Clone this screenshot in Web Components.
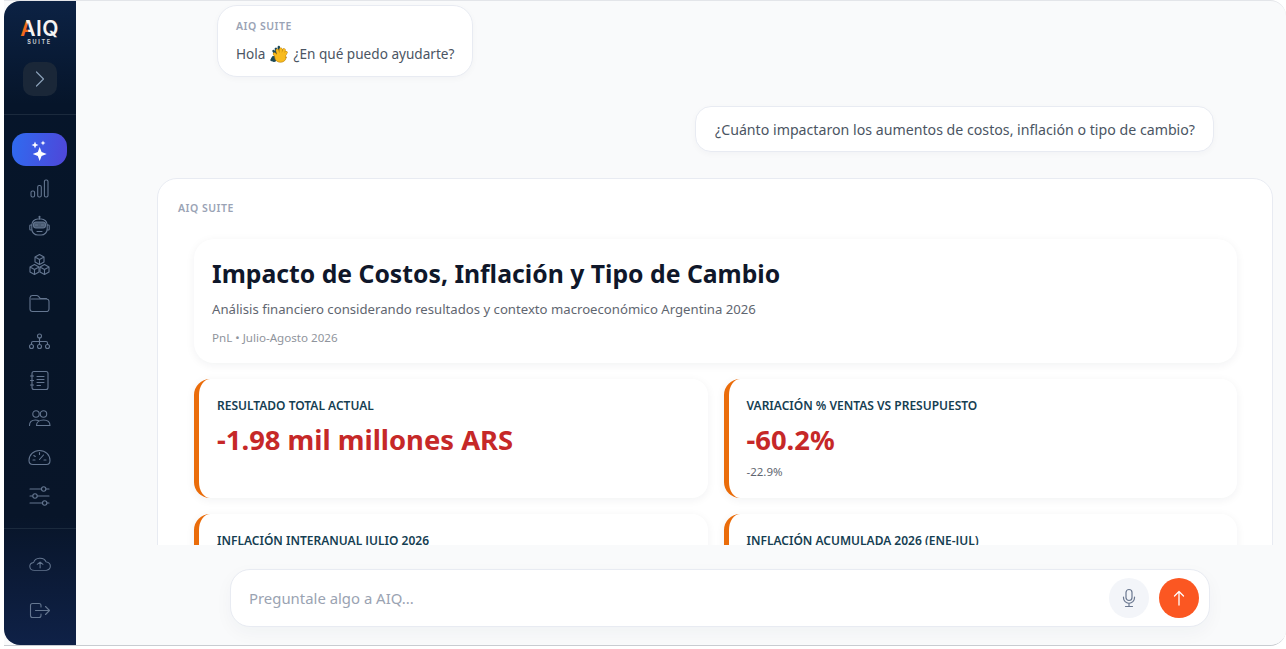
<!DOCTYPE html>
<html lang="es">
<head>
<meta charset="utf-8">
<title>AIQ Suite</title>
<style>
  html, body { margin: 0; height: 100%; background: #fff; overflow: hidden; }
  body { font-family: "Noto Sans", "Liberation Sans", sans-serif; }
</style>
</head>
<body>
<app-shell>
  <side-bar slot="side"></side-bar>
  <chat-view slot="main">
    <chat-bubble kind="hello" label="AIQ SUITE">Hola <clap-emoji></clap-emoji> ¿En qué puedo ayudarte?</chat-bubble>
    <chat-bubble kind="user">¿Cuánto impactaron los aumentos de costos, inflación o tipo de cambio?</chat-bubble>
    <report-card label="AIQ SUITE">
      <report-header
        heading="Impacto de Costos, Inflación y Tipo de Cambio"
        sub="Análisis financiero considerando resultados y contexto macroeconómico Argentina 2026"
        meta="PnL • Julio-Agosto 2026"></report-header>
      <kpi-card name="RESULTADO TOTAL ACTUAL" value="-1.98 mil millones ARS"></kpi-card>
      <kpi-card name="VARIACIÓN % VENTAS VS PRESUPUESTO" value="-60.2%" note="-22.9%"></kpi-card>
      <kpi-card name="INFLACIÓN INTERANUAL JULIO 2026" value="31.8%"></kpi-card>
      <kpi-card name="INFLACIÓN ACUMULADA 2026 (ENE-JUL)" value="16.5%"></kpi-card>
    </report-card>
  </chat-view>
</app-shell>

<script>
class AppShell extends HTMLElement {
  constructor() {
    super();
    this.attachShadow({ mode: "open" }).innerHTML = `
      <style>
        :host { display: flex; box-sizing: border-box; height: 649px; padding: 0 0 3px 4px; }
        .wrap { flex: 1; min-width: 0; display: flex; border-top: 1px solid #e3e5e9; border-bottom: 1px solid #c9ccd1;
                border-radius: 0 16px 16px 0; overflow: hidden; background: #f9fafb; }
      </style>
      <div class="wrap"><slot name="side"></slot><slot name="main"></slot></div>`;
  }
}

const navIcons = {
  stars: `<path fill="#fff" stroke="none" d="M11.700 9l1.900 5.100 5.100 1.900-5.100 1.900-1.900 5.100-1.900-5.100-5.100-1.900 5.100-1.900zM7 3.500l1 2.500 2.500 1-2.500 1-1 2.500-1-2.500-2.500-1 2.500-1zM15 2.500l.7 1.800 1.800.7-1.800.7-.7 1.800-.7-1.800-1.800-.7 1.800-.7z"/>`,
  bars: `<rect x="3" y="14" width="3.600" height="6" rx="1.500"/><rect x="9.700" y="8.500" width="3.600" height="11.500" rx="1.500"/><rect x="16.400" y="3" width="3.600" height="17" rx="1.500"/>`,
  bot: `<path d="M11.500 4V2.200"/><circle cx="11.500" cy="1.800" r=".5"/><rect x="3.800" y="4" width="15.400" height="16" rx="6"/><path d="M3.800 10H2.600a.8.800 0 0 0-.8.8v3.400a.8.800 0 0 0 .8.8h1.200M19.200 10h1.200a.8.800 0 0 1 .8.8v3.400a.8.800 0 0 1-.8.8h-1.200"/><rect x="5.500" y="7" width="12" height="6" rx="2.500" fill="rgba(130,150,175,.55)"/><path d="M7.500 10h2M13.500 10h2M9 16.500h5"/>`,
  cubes: `<path d="M11.500 1.500l4.500 2.500v5l-4.500 2.500L7 9V4zM7 4l4.500 2.500L16 4M11.500 6.500v5"/><path d="M6.500 11.500L11 14v5l-4.500 2.500L2 19v-5zM2 14l4.500 2.500L11 14M6.500 16.500v5"/><path d="M16.500 11.500L21 14v5l-4.500 2.500L12 19v-5zM12 14l4.500 2.500L21 14M16.500 16.500v5"/>`,
  folder: `<path d="M2 5.500V17a2.500 2.500 0 0 0 2.500 2.500h14A2.500 2.500 0 0 0 21 17v-7.500A2.500 2.500 0 0 0 18.500 7H3.500M2 5.500A2.500 2.500 0 0 1 4.500 3.500h4.200c.7 0 1.300.3 1.800.8l1.300 1.500c.5.500 1.100.8 1.800.8h4.900"/>`,
  tree: `<circle cx="11.500" cy="6" r="2"/><circle cx="3.500" cy="16.500" r="2"/><circle cx="11.500" cy="16.500" r="2"/><circle cx="19.500" cy="16.500" r="2"/><path d="M11.500 8v6.500M3.500 14.500v-1.500a1.500 1.500 0 0 1 1.500-1.500h13a1.500 1.500 0 0 1 1.500 1.500v1.500"/>`,
  notebook: `<rect x="4" y="2.500" width="16" height="18" rx="2"/><path d="M9 7.500h7M9 10.500h7M9 13.500h7M9 16.500h3.500M2.500 7h3M2.500 11.500h3M2.500 16h3"/>`,
  users: `<circle cx="8" cy="7" r="3.200"/><circle cx="15.500" cy="7" r="3.200"/><path d="M1.500 18.500c0-3.300 2.200-5.500 6-5.500 1 0 2 .2 2.800.6M8.500 18.500c0-3.300 3-5.500 7-5.500s6.500 2.200 6.500 5.500z"/>`,
  gauge: `<path d="M5 19.500h13.500c2 0 3.500-1.600 3.500-4 0-5.500-4.500-10-10.500-10S1 10 1 15.500c0 2.400 1.800 4 4 4z"/><path d="M11.500 14.500l4-4.500M11.500 7.500v2M5 15H7M5.800 10.500l1.500 1M16 15h2"/>`,
  sliders: `<path d="M2 5h11.500M18 5h3M2 12h2.500M9.500 12h11.500M2 19h12.500M19 19h2"/><circle cx="15.700" cy="5" r="2.200"/><circle cx="7" cy="12" r="2.200"/><circle cx="16.700" cy="19" r="2.200"/>`,
  cloud: `<g transform="translate(.7 2.800) scale(.95 .8)"><path d="M7 19.500H6a5 5 0 0 1-.8-9.900 6.800 6.800 0 0 1 13.100-.7 5.400 5.400 0 0 1 .2 10.600z"/><path d="M12 16.500v-7M9 12l3-3 3 3"/></g>`,
  logout: `<path d="M13 8V6.500a2 2 0 0 0-2-2H4.500a2 2 0 0 0-2 2v10a2 2 0 0 0 2 2H11a2 2 0 0 0 2-2V15"/><path d="M7.500 11.500h14M17.500 7.500l4 4-4 4"/>`
};

class NavIcon extends HTMLElement {
  constructor() {
    super();
    this.attachShadow({ mode: "open" });
  }
  connectedCallback() {
    const active = this.hasAttribute("active");
    this.shadowRoot.innerHTML = `
      <style>
        :host { display: flex; justify-content: center; align-items: center; padding-right: 1px; height: ${this.getAttribute("h") || 38.4}px; }
        .pill { display: flex; align-items: center; justify-content: center; width: 55px; height: 33px; border-radius: 14px; }
        .on { background: linear-gradient(100deg, #2f6bf0, #4f46d8); }
        svg { width: 23px; height: 23px; fill: none; stroke: #647690; stroke-width: 1.100; stroke-linecap: round; stroke-linejoin: round; }
      </style>
      <div class="pill ${active ? "on" : ""}"><svg viewBox="0 0 23 23">${navIcons[this.getAttribute("icon")]}</svg></div>`;
  }
}

class SideBar extends HTMLElement {
  constructor() {
    super();
    this.attachShadow({ mode: "open" }).innerHTML = `
      <style>
        :host { display: flex; flex-direction: column; box-sizing: border-box; flex: 0 0 72px; width: 72px; height: 644px;
                border-radius: 16px 0 0 16px; color: #fff;
                background: linear-gradient(180deg, #0c2244 0%, #06152a 16%, #071528 50%, #081529 80%, #0f2147 100%); }
        .top { display: flex; flex-direction: column; align-items: center; height: 114px; box-sizing: border-box; border-bottom: 1px solid #1b2a3d; }
        .logo { display: block; width: 72px; height: 50px; }
        .logo text { font-family: "Inter", "Liberation Sans", sans-serif; text-anchor: middle; }
        .toggle { display: flex; align-items: center; justify-content: center; width: 34px; height: 34px; margin-top: 11px; border-radius: 10px; background: #1a2738; }
        .toggle svg { width: 14px; height: 18px; fill: none; stroke: #8aa0b8; stroke-width: 1.200; stroke-linecap: round; stroke-linejoin: round; }
        .nav { display: flex; flex-direction: column; padding-top: 15px; height: 414px; box-sizing: border-box; border-bottom: 1px solid #1b2a3d; }
        .foot { display: flex; flex-direction: column; padding-top: 15px; gap: 9px; }
      </style>
      <div class="top">
        <svg class="logo" viewBox="0 0 72 50">
          <defs><linearGradient id="lg" gradientUnits="userSpaceOnUse" x1="16" y1="30" x2="31" y2="27">
            <stop offset=".5" stop-color="#f26a1b"/><stop offset=".56" stop-color="#f4f4f4"/>
          </linearGradient></defs>
          <text x="35.500" y="35" font-size="21" font-weight="600" letter-spacing=".4" fill="url(#lg)">AIQ</text>
          <text x="35.500" y="42.500" font-size="5.500" font-weight="700" letter-spacing="1.700" fill="#c8ccd3">SUITE</text>
        </svg>
        <div class="toggle"><svg viewBox="0 0 14 18"><path d="M3.500 2l7 7-7 7"/></svg></div>
      </div>
      <div class="nav">
        <nav-icon icon="stars" active h="39"></nav-icon>
        <nav-icon icon="bars"></nav-icon>
        <nav-icon icon="bot"></nav-icon>
        <nav-icon icon="cubes"></nav-icon>
        <nav-icon icon="folder"></nav-icon>
        <nav-icon icon="tree"></nav-icon>
        <nav-icon icon="notebook"></nav-icon>
        <nav-icon icon="users"></nav-icon>
        <nav-icon icon="gauge"></nav-icon>
        <nav-icon icon="sliders"></nav-icon>
      </div>
      <div class="foot">
        <nav-icon icon="cloud"></nav-icon>
        <nav-icon icon="logout"></nav-icon>
      </div>`;
  }
}

class ClapEmoji extends HTMLElement {
  constructor() {
    super();
    this.attachShadow({ mode: "open" }).innerHTML = `
      <style>
        :host { display: inline-block; width: 18px; height: 18px; margin: 0 2px 0 1px; vertical-align: -4px; }
        svg { display: block; width: 18px; height: 18px; stroke-linecap: round; fill: none; }
      </style>
      <svg viewBox="0 0 18 18">
        <g stroke="#1d4a58" stroke-width="2.400">
          <path d="M7 11L3.500 6M7.500 10L5.800 3.800M8.500 9.500L8.800 2"/>
          <path d="M3 12.500L1.500 15"/>
        </g>
        <ellipse cx="4" cy="14" rx="2.500" ry="3" fill="#1d4a58"/>
        <g stroke="#b77f10" stroke-width="3.200">
          <path d="M9 11L7.300 5.500M10.500 11L10.800 4.200M12 11.500L14 5M13 12.500L16 7.500M7 12L4.500 9"/>
        </g>
        <ellipse cx="10.500" cy="12.500" rx="5.700" ry="4.800" fill="#f8bb1e" stroke="#b77f10" stroke-width=".6"/>
        <g stroke="#f8bb1e" stroke-width="2.400">
          <path d="M9 11L7.300 5.500M10.500 11L10.800 4.200M12 11.500L14 5M13 12.500L16 7.500M7 12L4.500 9"/>
        </g>
      </svg>`;
  }
}

class ChatBubble extends HTMLElement {
  constructor() {
    super();
    this.attachShadow({ mode: "open" });
  }
  connectedCallback() {
    const label = this.getAttribute("label");
    const hello = this.getAttribute("kind") === "hello";
    this.shadowRoot.innerHTML = `
      <style>
        :host { display: flex; justify-content: ${hello ? "flex-start" : "flex-end"};
                margin: ${hello ? "0 0 29px 141px" : "0 72px 26px 0"}; }
        .b { box-sizing: border-box; background: #fff; border: 1px solid #e8ebf2; border-radius: ${hello ? "20px" : "16px"};
             box-shadow: 0 2px 6px rgba(30,40,70,.03); color: #4b5563; font-size: ${hello ? 13.6 : 14.18}px; line-height: ${hello ? 24 : 22}px;
             padding: ${hello ? "12px 18px 10px 18px" : "12px 18px 10px 19px"}; white-space: nowrap; }
        .label { font-size: 10.500px; line-height: 16px; font-weight: 600; letter-spacing: .5px; color: #9aa3b5; margin-bottom: 8px; }
      </style>
      <div class="b">${label ? `<div class="label">${label}</div>` : ""}<slot></slot></div>`;
  }
}

class ReportCard extends HTMLElement {
  constructor() {
    super();
    this.attachShadow({ mode: "open" });
  }
  connectedCallback() {
    this.shadowRoot.innerHTML = `
      <style>
        :host { display: block; box-sizing: border-box; width: 1116px; margin-left: 81px; background: #fff;
                border: 1px solid #e8ebf2; border-radius: 20px; padding: 21px 35px 24px 20px; }
        .label { font-size: 10.500px; line-height: 16px; font-weight: 600; letter-spacing: .5px; color: #9aa3b5; margin-bottom: 23px; }
        .body { margin-left: 16px; display: grid; grid-template-columns: 1fr 1fr; gap: 16px; }
        ::slotted(report-header) { grid-column: 1 / -1; }
      </style>
      <div class="label">${this.getAttribute("label")}</div>
      <div class="body"><slot></slot></div>`;
  }
}

class ReportHeader extends HTMLElement {
  constructor() {
    super();
    this.attachShadow({ mode: "open" });
  }
  connectedCallback() {
    this.shadowRoot.innerHTML = `
      <style>
        :host { display: block; box-sizing: border-box; height: 124px; background: #fff; border-radius: 20px;
                box-shadow: 0 2px 10px rgba(20,30,50,.06); padding: 18px 18px 0 18px; }
        h1 { margin: 0; font-size: 24.750px; line-height: 34px; font-weight: 700; color: #0f172a; }
        p { margin: 8px 0 0; font-size: 13.170px; line-height: 20px; color: #5f6670; }
        small { display: block; margin-top: 10px; font-size: 11.600px; line-height: 18px; color: #8f949c; }
      </style>
      <h1>${this.getAttribute("heading")}</h1>
      <p>${this.getAttribute("sub")}</p>
      <small>${this.getAttribute("meta")}</small>`;
  }
}

class KpiCard extends HTMLElement {
  constructor() {
    super();
    this.attachShadow({ mode: "open" });
  }
  connectedCallback() {
    const note = this.getAttribute("note");
    this.shadowRoot.innerHTML = `
      <style>
        :host { display: block; box-sizing: border-box; height: 119px; background: #fff; border-left: 5px solid #ea6c0a; border-radius: 16px;
                box-shadow: 0 2px 10px rgba(20,30,50,.06); padding: 18px 18px 0 18px; }
        .name { font-size: 12px; line-height: 17px; font-weight: 600; color: #153e52; }
        .value { margin-top: 8px; font-size: 27.400px; line-height: 36px; font-weight: 700; color: #c62828; }
        .note { margin-top: 6px; font-size: 11.500px; line-height: 16px; color: #5f6670; }
      </style>
      <div class="name">${this.getAttribute("name")}</div>
      <div class="value">${this.getAttribute("value")}</div>
      ${note ? `<div class="note">${note}</div>` : ""}`;
  }
}

class ChatComposer extends HTMLElement {
  constructor() {
    super();
    this.attachShadow({ mode: "open" }).innerHTML = `
      <style>
        :host { display: flex; flex: 0 0 100px; box-sizing: border-box; height: 100px; padding: 24px 76px 0 154px; background: #f9fafb; }
        .box { flex: 1; display: flex; align-items: center; gap: 10px; box-sizing: border-box; height: 58px; padding: 0 10px 0 18px;
               background: #fff; border: 1px solid #e8ebf2; border-radius: 20px; box-shadow: 0 6px 18px rgba(30,40,70,.04); }
        .ph { flex: 1; font-size: 14.900px; color: #9aa3b2; }
        .btn { display: flex; align-items: center; justify-content: center; width: 40px; height: 40px; border-radius: 50%; }
        .mic { background: #f3f5f9; }
        .send { background: #fb5722; }
        svg { fill: none; stroke-linecap: round; stroke-linejoin: round; }
      </style>
      <div class="box">
        <div class="ph">Preguntale algo a AIQ...</div>
        <div class="btn mic"><svg width="20" height="20" viewBox="0 0 20 20" stroke="#6b7890" stroke-width="1.200"><rect x="7" y="1.500" width="6" height="11" rx="3"/><path d="M4.500 9v.8a5.500 5.500 0 0 0 11 0V9M10 15.500v3M6.500 18.500h7"/></svg></div>
        <div class="btn send"><svg width="20" height="20" viewBox="0 0 20 20" stroke="#fff" stroke-width="1.300"><path d="M10 17V3.500M5.500 8L10 3.500 14.500 8"/></svg></div>
      </div>`;
  }
}

class ChatView extends HTMLElement {
  constructor() {
    super();
    this.attachShadow({ mode: "open" }).innerHTML = `
      <style>
        :host { flex: 1; min-width: 0; display: flex; flex-direction: column; height: 644px; }
        .scroll { flex: 1; min-height: 0; overflow: hidden; padding-top: 4px; }
      </style>
      <div class="scroll"><slot></slot></div>
      <chat-composer></chat-composer>`;
  }
}

customElements.define("nav-icon", NavIcon);
customElements.define("side-bar", SideBar);
customElements.define("clap-emoji", ClapEmoji);
customElements.define("chat-bubble", ChatBubble);
customElements.define("report-header", ReportHeader);
customElements.define("kpi-card", KpiCard);
customElements.define("report-card", ReportCard);
customElements.define("chat-composer", ChatComposer);
customElements.define("chat-view", ChatView);
customElements.define("app-shell", AppShell);
</script>
</body>
</html>
